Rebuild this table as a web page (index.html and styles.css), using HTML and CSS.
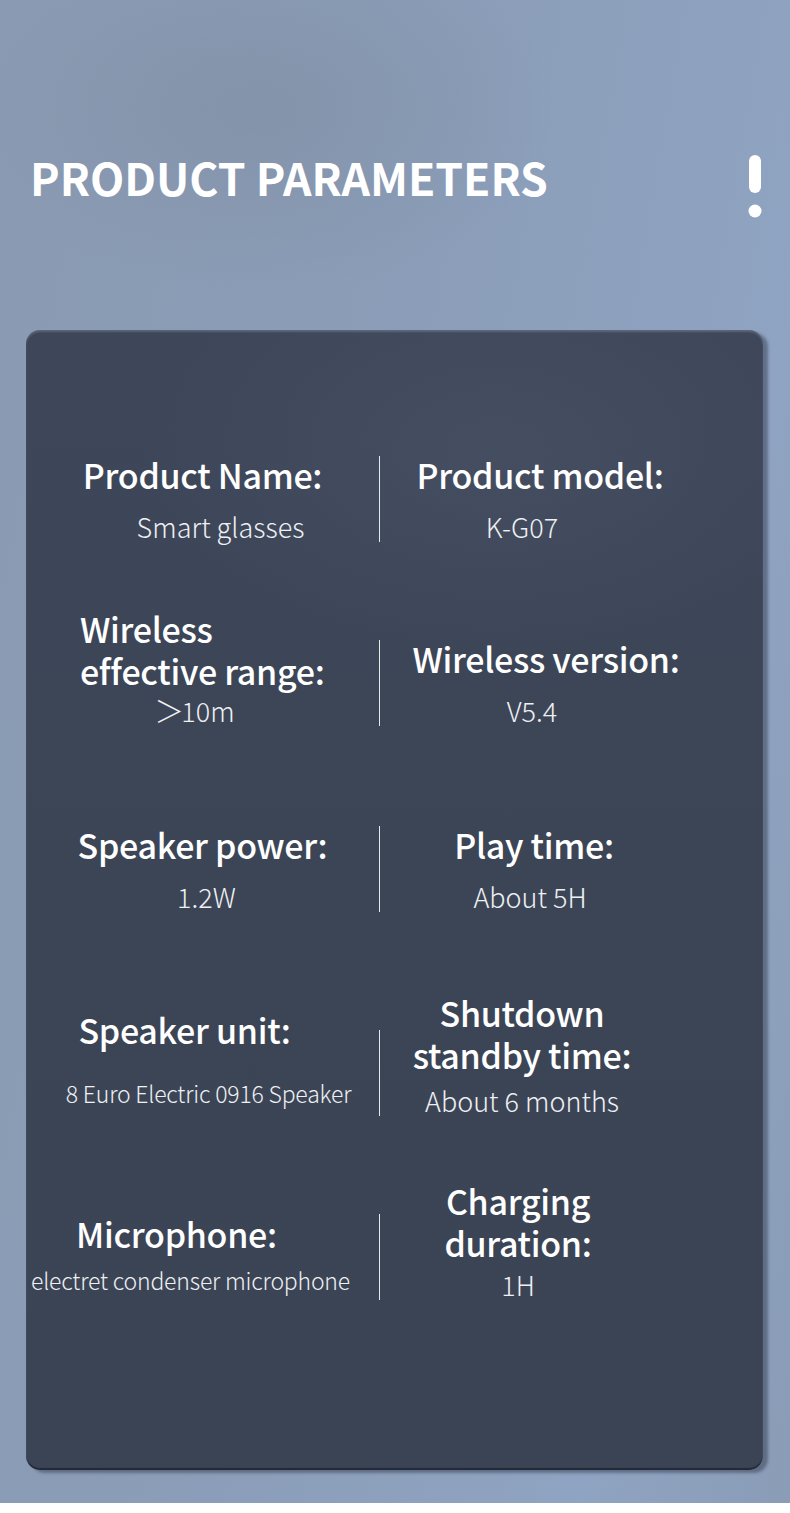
FILE: index.html
```html
<!DOCTYPE html>
<html lang="en">
<head>
<meta charset="utf-8">
<title>Product Parameters</title>
<link rel="stylesheet" href="styles.css">
</head>
<body>
<div class="page">
  <header class="head">
    <h1 class="title">PRODUCT PARAMETERS</h1>
    <svg class="bang" width="14" height="64" viewBox="0 0 14 64" aria-hidden="true">
      <rect x="1" y="0" width="12" height="38" rx="6" fill="#fff"/>
      <circle cx="7" cy="56" r="6.5" fill="#fff"/>
    </svg>
  </header>

  <section class="card">
    <div class="row">
      <div class="cell cell--l">
        <div class="label">Product Name:</div>
        <div class="value shift-r18">Smart glasses</div>
      </div>
      <div class="rule"></div>
      <div class="cell cell--r">
        <div class="label shift-r10">Product model:</div>
        <div class="value shift-l8">K-G07</div>
      </div>
    </div>

    <div class="row row--2">
      <div class="cell cell--l">
        <div class="label label--left">Wireless<br>effective range:</div>
        <div class="value value--tight shift-l8"><span class="gt">＞</span>10m</div>
      </div>
      <div class="rule"></div>
      <div class="cell cell--r">
        <div class="label shift-r16">Wireless version:</div>
        <div class="value shift-r2">V5.4</div>
      </div>
    </div>

    <div class="row row--3">
      <div class="cell cell--l">
        <div class="label">Speaker power:</div>
        <div class="value shift-r4">1.2W</div>
      </div>
      <div class="rule"></div>
      <div class="cell cell--r">
        <div class="label shift-r4">Play time:</div>
        <div class="value">About 5H</div>
      </div>
    </div>

    <div class="row row--4">
      <div class="cell cell--l cell--lift8">
        <div class="label label--far shift-l18">Speaker unit:</div>
        <div class="value value--sm shift-r6">8 Euro Electric 0916 Speaker</div>
      </div>
      <div class="rule"></div>
      <div class="cell cell--r">
        <div class="label label--near shift-l8">Shutdown<br>standby time:</div>
        <div class="value shift-l8">About 6 months</div>
      </div>
    </div>

    <div class="row row--5">
      <div class="cell cell--l cell--lift5">
        <div class="label label--near shift-l26">Microphone:</div>
        <div class="value value--sm shift-l12">electret condenser microphone</div>
      </div>
      <div class="rule"></div>
      <div class="cell cell--r">
        <div class="label label--nearer shift-l12">Charging<br>duration:</div>
        <div class="value shift-l12">1H</div>
      </div>
    </div>
  </section>
</div>
</body>
</html>
```

FILE: styles.css
```css
html, body {
  margin: 0;
  padding: 0;
  background: #ffffff;
}

body {
  font-family: "Noto Sans CJK SC", "Source Sans Pro", "Noto Sans", sans-serif;
  color: #ffffff;
}

.page {
  width: 790px;
  height: 1503px;
  box-sizing: border-box;
  padding-top: 147px;
  background:
    radial-gradient(ellipse 420px 260px at 260px 110px, rgba(125,140,160,0.55), rgba(125,140,160,0) 70%),
    linear-gradient(100deg, #8a9ab2 0%, #8b9db8 45%, #8fa4c2 80%, #8a9cb6 100%);
  overflow: hidden;
}

.head {
  display: flex;
  justify-content: space-between;
  align-items: flex-start;
  padding: 0 28px 0 30px;
  height: 183px;
}

.title {
  margin: 0;
  font-size: 44.5px;
  font-weight: 700;
  line-height: 60px;
  letter-spacing: 0;
  color: #ffffff;
}

.bang {
  display: block;
  margin-top: 8px;
}

.card {
  width: 737px;
  margin-left: 26px;
  box-sizing: border-box;
  height: 1140px;
  padding-top: 126px;
  border-radius: 14px;
  background:
    radial-gradient(ellipse 500px 300px at 470px 120px, rgba(78,88,108,0.45), rgba(78,88,108,0) 70%),
    linear-gradient(180deg, #3e4759 0%, #3c4556 50%, #3b4455 100%);
  box-shadow:
    inset 0 2px 2px rgba(150,160,180,0.35),
    inset 0 -2px 1px rgba(25,30,40,0.7),
    5px 3px 3px rgba(60,70,90,0.55);
}

.row {
  display: grid;
  grid-template-columns: 353px 1px 300px;
  grid-template-rows: 86px;
}

.row--2 { margin-top: 98px; }
.row--3 { margin-top: 100px; }
.row--4 { margin-top: 118px; }
.row--5 { margin-top: 98px; }

.rule {
  background: #e6e8ec;
  width: 1px;
  height: 86px;
}

.cell {
  align-self: unsafe end;
  display: flex;
  flex-direction: column;
  align-items: center;
  text-align: center;
}

.cell--lift8 { padding-bottom: 8px; }
.cell--lift5 { padding-bottom: 5px; }

.label {
  font-size: 34px;
  font-weight: 500;
  line-height: 42px;
  white-space: nowrap;
  letter-spacing: -0.3px;
}

.label--left {
  align-self: flex-start;
  text-align: left;
  margin-left: 54px;
}

.value {
  margin-top: 16px;
  font-size: 27px;
  font-weight: 300;
  line-height: 30px;
  white-space: nowrap;
  color: #eef0f3;
}

.gt {
  font-weight: 200;
  font-size: 30px;
  margin-right: -3px;
}

.value--sm {
  font-size: 23px;
  letter-spacing: -0.2px;
}

.value--tight { margin-top: 2px; }
.label--far + .value { margin-top: 27px; }
.label--near + .value { margin-top: 10px; }
.label--nearer + .value { margin-top: 6px; }

.shift-r2 { position: relative; left: 2px; }
.shift-r4 { position: relative; left: 4px; }
.shift-r6 { position: relative; left: 6px; }
.shift-r10 { position: relative; left: 10px; }
.shift-r16 { position: relative; left: 16px; }
.shift-r18 { position: relative; left: 18px; }
.shift-l8 { position: relative; left: -8px; }
.shift-l12 { position: relative; left: -12px; }
.shift-l18 { position: relative; left: -18px; }
.shift-l26 { position: relative; left: -26px; }
```
